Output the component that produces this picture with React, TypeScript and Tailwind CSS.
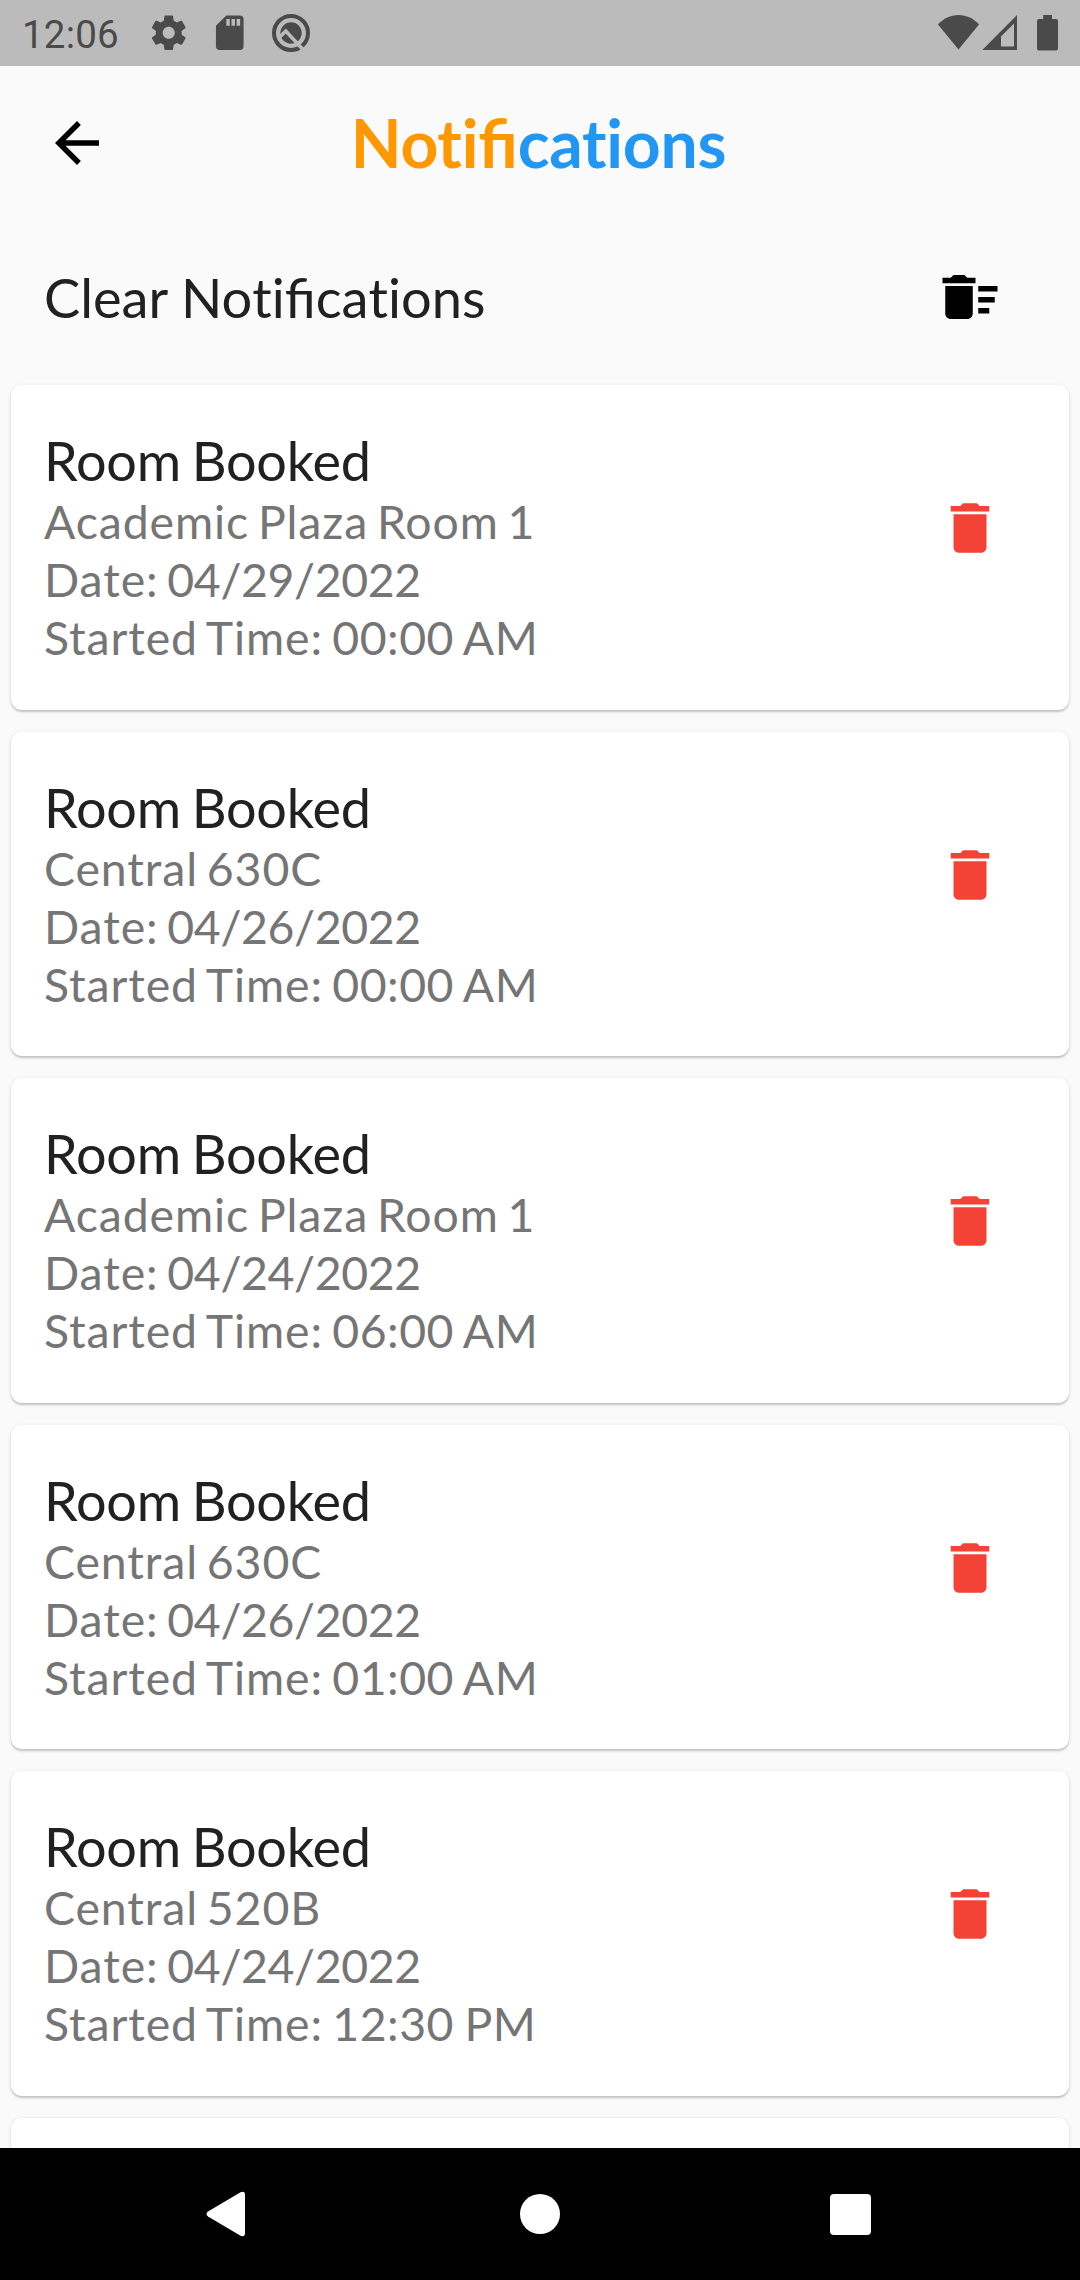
type Notice = { place: string; date: string; time: string };

const notices: Notice[] = [
  { place: "Academic Plaza Room 1", date: "04/29/2022", time: "00:00 AM" },
  { place: "Central 630C", date: "04/26/2022", time: "00:00 AM" },
  { place: "Academic Plaza Room 1", date: "04/24/2022", time: "06:00 AM" },
  { place: "Central 630C", date: "04/26/2022", time: "01:00 AM" },
  { place: "Central 520B", date: "04/24/2022", time: "12:30 PM" },
];

function Icon({ d, className }: { d: string; className: string }) {
  return (
    <svg viewBox="0 0 24 24" fill="currentColor" className={className}>
      <path d={d} />
    </svg>
  );
}

const GEAR =
  "M19.43 12.98c.04-.32.07-.64.07-.98s-.03-.66-.07-.98l2.11-1.65c.19-.15.24-.42.12-.64l-2-3.46c-.12-.22-.39-.3-.61-.22l-2.49 1c-.52-.4-1.08-.73-1.69-.98l-.38-2.65C14.46 2.18 14.25 2 14 2h-4c-.25 0-.46.18-.49.42l-.38 2.65c-.61.25-1.17.59-1.69.98l-2.49-1c-.23-.09-.49 0-.61.22l-2 3.46c-.13.22-.07.49.12.64l2.11 1.65c-.04.32-.07.65-.07.98s.03.66.07.98l-2.11 1.65c-.19.15-.24.42-.12.64l2 3.46c.12.22.39.3.61.22l2.49-1c.52.4 1.08.73 1.69.98l.38 2.65c.03.24.24.42.49.42h4c.25 0 .46-.18.49-.42l.38-2.65c.61-.25 1.17-.59 1.69-.98l2.49 1c.23.09.49 0 .61-.22l2-3.46c.12-.22.07-.49-.12-.64l-2.11-1.65zM12 15.5c-1.93 0-3.5-1.57-3.5-3.5s1.57-3.5 3.5-3.5 3.5 1.57 3.5 3.5-1.57 3.5-3.5 3.5z";
const SD_CARD =
  "M18 2h-8L4.02 8 4 20c0 1.1.9 2 2 2h12c1.1 0 2-.9 2-2V4c0-1.1-.9-2-2-2zm-6 6h-2V4h2v4zm3 0h-2V4h2v4zm3 0h-2V4h2v4z";
const BACK = "M20 11H7.83l5.59-5.59L12 4l-8 8 8 8 1.41-1.41L7.83 13H20v-2z";
const SWEEP =
  "M15 16h4v2h-4zm0-8h7v2h-7zm0 4h6v2h-6zM3 18c0 1.1.9 2 2 2h6c1.1 0 2-.9 2-2V8H3v10zM14 5h-3l-1-1H6L5 5H2v2h12z";
const TRASH =
  "M6 19c0 1.1.9 2 2 2h8c1.1 0 2-.9 2-2V7H6v12zM19 4h-3.5l-1-1h-5l-1 1H5v2h14V4z";

function StatusBar() {
  return (
    <div className="flex h-[66px] shrink-0 items-center justify-between bg-[#bbbbbb] px-[22px] text-[#4a4a4a]">
      <div className="flex items-center">
        <span className="w-[96px] whitespace-nowrap pt-[3px] font-['Roboto',sans-serif] text-[38.5px] leading-[46px] tracking-[0.2px]">
          12:06
        </span>
        <Icon d={GEAR} className="ml-[29.5px] size-[41.5px]" />
        <Icon d={SD_CARD} className="ml-[19.5px] size-[41.5px]" />
        <svg viewBox="0 0 40 40" className="ml-[20.5px] size-10" fill="none">
          <circle cx="20" cy="20" r="17" stroke="currentColor" strokeWidth="4" />
          <circle cx="20" cy="20" r="10.7" fill="currentColor" />
          <path
            d="M7.500 25.200 14.800 18 32 36.500"
            stroke="#bbbbbb"
            strokeWidth="3.6"
          />
        </svg>
      </div>
      <svg viewBox="0 0 120 36" className="h-9 w-[120px]" fill="currentColor">
        <path d="M0 9.5C5.5 3.5 12.5 0 20.5 0S35.500 3.500 41 9.500L20.500 34.500z" />
        <path fillRule="evenodd" d="M79 0v35H44.300zM76 8.500 63 21.500V31.500H76z" />
        <path d="M105.200 0h8.800v4h4a2 2 0 0 1 2 2v27.500a2 2 0 0 1-2 2h-17a2 2 0 0 1-2-2V6a2 2 0 0 1 2-2h4.200z" />
      </svg>
    </div>
  );
}

function Card({ place, date, time }: Notice) {
  return (
    <article className="flex h-[324.5px] shrink-0 items-start justify-between rounded-[11px] bg-white pl-[33px] pr-[66px] shadow-[0_2px_2px_0_rgba(0,0,0,0.17),0_1px_4px_0_rgba(0,0,0,0.10)]">
      <div className="pt-[43px] text-[46.4px] leading-[58px] tracking-[0.9px] text-[#757575] [word-spacing:-4px]">
        <h2 className="-mb-px text-[54px] leading-[65px] tracking-[-0.2px] text-[#212121] [word-spacing:-2.9px]">
          Room Booked
        </h2>
        <p>{place}</p>
        <p>
          Date: <span className="tracking-[-0.36px]">{date}</span>
        </p>
        <p className="[word-spacing:-3.5px]">
          Started Time:{" "}
          <span className="tracking-[0.5px] [word-spacing:-2px]">{time}</span>
        </p>
      </div>
      <button aria-label="Delete" className="mt-[110px]">
        <Icon d={TRASH} className="size-[66px] text-[#f44336]" />
      </button>
    </article>
  );
}

export default function App() {
  return (
    <div className="flex h-[2280px] w-[1080px] flex-col overflow-hidden bg-[#fafafa] font-['Lato',sans-serif]">
      <StatusBar />
      <header className="grid h-[154px] shrink-0 grid-cols-[1fr_auto_1fr] items-center px-11">
        <button aria-label="Back">
          <Icon d={BACK} className="size-[66px] text-black" />
        </button>
        <h1 className="pr-[3px] text-[66px] font-bold leading-[80px] tracking-[-0.28px] text-[#2196f3]">
          <span className="text-[#ff9800]">
            Noti<span className="tracking-normal">fi</span>
          </span>
          cations
        </h1>
      </header>
      <div className="flex h-[165px] shrink-0 items-start justify-between pl-11 pr-[77px] pt-11">
        <p className="pt-px text-[54.2px] leading-[66px] text-[#212121]">
          Clear No<span className="[font-variant-ligatures:none]">ti</span>fica
          <span className="[font-variant-ligatures:none]">ti</span>ons
        </p>
        <button aria-label="Clear all">
          <Icon d={SWEEP} className="size-[66px] text-black" />
        </button>
      </div>
      <main className="flex min-h-0 flex-1 flex-col gap-[22px] px-[11px]">
        {notices.map((n, i) => (
          <Card key={i} {...n} />
        ))}
        <div className="flex-1 rounded-t-[11px] bg-white shadow-[0_1px_4px_0_rgba(0,0,0,0.14)]" />
      </main>
      <nav className="relative z-10 flex h-[132px] shrink-0 items-center justify-between bg-black pl-[206px] pr-[209px] text-white">
        <svg viewBox="0 0 40 46" className="h-[46px] w-10" fill="currentColor">
          <path d="M34.500 1.200 2 20.600Q-1 23 2 25.400L34.500 44.800Q39 46.500 39 42V4Q39-.5 34.500 1.200z" />
        </svg>
        <span className="ml-[4px] size-10 rounded-full bg-white" />
        <span className="size-[41px] rounded-[4px] bg-white" />
      </nav>
    </div>
  );
}
